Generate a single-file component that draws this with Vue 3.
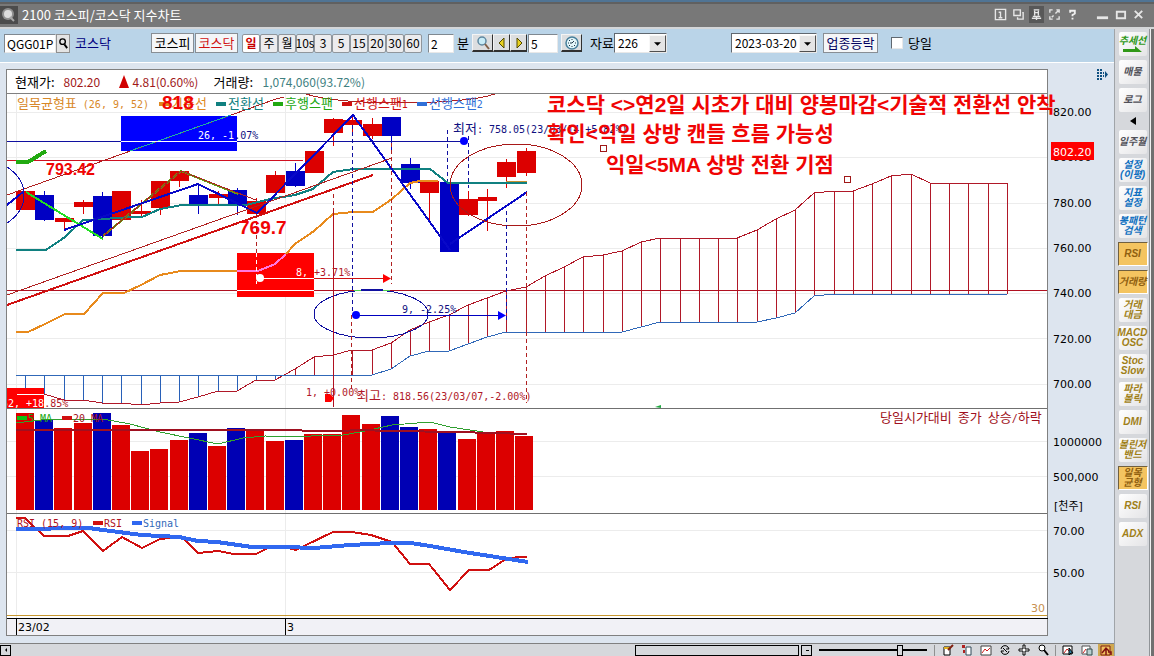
<script setup>
import { ref } from 'vue'

const code = ref('QGG01P')
const minute = ref('2')
const step = ref('5')
const count = ref('226')
const date = ref('2023-03-20')
const today = ref(false)
const zoomLevel = ref(76)

const periods = ['일', '주', '월', '10s', '3', '5', '15', '20', '30', '60']

const studies = [
  { lines: ['추세선'], tone: 'green', arrow: true },
  { lines: ['매물'], tone: 'gray' },
  { lines: ['로그'], tone: 'gray' },
  { divider: true },
  { lines: ['일주월'], tone: 'gray' },
  { lines: ['설정', '(이평)'], tone: 'blue' },
  { lines: ['지표', '설정'], tone: 'blue' },
  { lines: ['봉패턴', '검색'], tone: 'blue' },
  { lines: ['RSI'], tone: 'gold', on: true },
  { lines: ['거래량'], tone: 'gold', on: true },
  { lines: ['거래', '대금'], tone: 'gold' },
  { lines: ['MACD', 'OSC'], tone: 'gold' },
  { lines: ['Stoc', 'Slow'], tone: 'gold' },
  { lines: ['파라', '볼릭'], tone: 'gold' },
  { lines: ['DMI'], tone: 'gold' },
  { lines: ['볼린저', '밴드'], tone: 'gold' },
  { lines: ['일목', '균형'], tone: 'gold', on: true },
  { lines: ['RSI'], tone: 'gold' },
  { lines: ['ADX'], tone: 'gold' }
]

const xAt = (i) => Math.round(25 + i * 19.25)

// direction, body top, body bottom, high, low
const candles = [
  ['u', 191, 210, 191, 210], ['d', 195, 220, 191, 221], ['u', 218, 222, 218, 230],
  ['u', 202, 207, 200, 214], ['d', 196, 236, 192, 238], ['u', 191, 220, 191, 220],
  ['u', 211, 214, 200, 217], ['u', 181, 208, 181, 215], ['u', 171, 181, 171, 187],
  ['d', 195, 206, 184, 214], ['u', 194, 198, 191, 205], ['d', 190, 205, 188, 215],
  ['u', 201, 214, 198, 214], ['u', 175, 193, 171, 193], ['d', 171, 186, 163, 187],
  ['u', 151, 173, 151, 173], ['u', 119, 133, 118, 146], ['u', 120, 125, 114, 135],
  ['u', 124, 136, 118, 139], ['d', 117, 136, 117, 153], ['d', 164, 183, 158, 189],
  ['u', 181, 193, 181, 223], ['d', 182, 252, 182, 252], ['u', 199, 215, 191, 216],
  ['u', 197, 201, 189, 231], ['u', 162, 177, 159, 188], ['u', 151, 173, 148, 176]
]

const spanA = [
  394, 394, 400, 400, 403, 403, 405, 403, 402, 397, 391, 391, 380, 380, 369, 357, 355, 350,
  350, 343, 330, 322, 315, 305, 298, 291, 287, 276, 267, 257, 255, 251, 242, 238, 238, 238,
  238, 238, 230, 219, 210, 193, 191, 191, 184, 176, 174, 183, 183, 183, 183, 183
]
const spanB = [
  ...Array(19).fill(375), 369, 356, 351, 351, 344, 337,
  ...Array(7).fill(332), 327, ...Array(6).fill(322), 318, 313, 296, ...Array(10).fill(294)
]
const pts = (arr) => arr.map((y, i) => `${xAt(i)},${y}`).join(' ')

const volumes = [
  ['u', 413], ['d', 420], ['u', 428], ['u', 423], ['d', 413], ['u', 425], ['u', 451],
  ['u', 449], ['u', 440], ['d', 433], ['u', 446], ['d', 428], ['u', 430], ['u', 441],
  ['d', 440], ['u', 434], ['u', 434], ['u', 415], ['u', 424], ['d', 416], ['d', 427],
  ['u', 429], ['d', 432], ['u', 439], ['u', 433], ['u', 431], ['u', 436]
]

const grid = [112, 157, 203, 248, 293, 338, 384, 441, 476, 530, 572]
const scale = [
  [116, '820.00'], [161, '800.00'], [207, '780.00'], [252, '760.00'], [297, '740.00'],
  [343, '720.00'], [388, '700.00'], [446, '1000000'], [481, '500,000'], [535, '70.00'], [577, '50.00']
]
const legend = [
  [159, '#e08820', '기준선', ''], [216, '#108080', '전환선', ''], [273, '#20a810', '후행스팬', ''],
  [342, '#d01010', '선행스팬', '1'], [417, '#3070d8', '선행스팬', '2']
]
</script>

<template>
  <div class="window">
    <header class="title">
      <svg class="logo" viewBox="0 0 18 18">
        <rect width="18" height="18" fill="#4c4c4c" />
        <circle cx="8" cy="8" r="6" fill="#909090" />
        <circle cx="8" cy="8" r="4" fill="#dcdcdc" />
        <path d="M10 11l4 4" stroke="#a8a8a8" stroke-width="2" />
      </svg>
      <h1>2100 코스피/코스닥 지수차트</h1>
      <div class="winbtns">
        <button aria-label="1번 화면"><svg viewBox="0 0 14 14"><path d="M1.500 1.500h11v11h-11zM5 4.500h2v6M5 10.500h4" fill="none" stroke="#e6e6e6" stroke-width="1.500" /></svg></button>
        <button aria-label="겹치기"><svg viewBox="0 0 14 14"><path d="M2 2h7v6H2zM11 5h1v7H6v-2" fill="none" stroke="#e6e6e6" stroke-width="1.500" /></svg></button>
        <button aria-label="고정" class="pinned"><svg viewBox="0 0 14 14"><path d="M4 2h6M5 3v5M9 3v5M3 9h8M2 11h10M7 9v4M5 5h4" fill="none" stroke="#e6e6e6" stroke-width="1.500" /></svg></button>
        <button aria-label="확대"><svg viewBox="0 0 14 14"><path d="M2 5V2h3M9 2h3v3M12 9v3H9M5 12H2V9M8 6l3-3M6 8l-2 2" fill="none" stroke="#e6e6e6" stroke-width="1.500" /></svg></button>
        <button aria-label="도움말"><svg viewBox="0 0 14 14"><path d="M4.500 5V3h5v3L7 7.500V9M7 10.500v2" fill="none" stroke="#f0f0f0" stroke-width="2" /></svg></button>
        <button aria-label="최소화" class="sys"><svg viewBox="0 0 14 14"><path d="M1 9h12v3H1z" fill="#e6e6e6" /></svg></button>
        <button aria-label="최대화"><svg viewBox="0 0 14 14"><path d="M3 4h9v7H3z" fill="none" stroke="#e6e6e6" stroke-width="2" /></svg></button>
        <button aria-label="닫기"><svg viewBox="0 0 14 14"><path d="M3 3l8 8M11 3l-8 8" stroke="#e6e6e6" stroke-width="2" /></svg></button>
      </div>
    </header>

    <div class="body">
      <main class="main">
        <form class="toolbar" @submit.prevent>
          <input v-model="code" class="field code" aria-label="종목코드" />
          <button class="find" aria-label="종목 검색"><svg viewBox="0 0 12 14"><circle cx="5" cy="5" r="3" fill="none" stroke="#000" stroke-width="1.500" /><path d="M7 8l3 4" stroke="#000" stroke-width="2" /></svg></button>
          <span class="name">코스닥</span>
          <button class="mkt">코스피</button>
          <button class="mkt sel">코스닥</button>
          <div class="periods">
            <button v-for="(p, i) in periods" :key="p" :class="{ active: i === 0 }">{{ p }}</button>
          </div>
          <input id="minute" v-model="minute" class="field minute" />
          <label for="minute" class="unit">분</label>
          <button class="raised wide" aria-label="돋보기"><svg viewBox="0 0 16 16"><circle cx="7" cy="6" r="4" fill="#c8ecf8" stroke="#6088a0" stroke-width="1.500" /><path d="M10 9l4 5" stroke="#806048" stroke-width="2" /></svg></button>
          <button class="raised" aria-label="이전"><svg viewBox="0 0 12 14"><path d="M8 2v10L3 7z" fill="#e8d020" stroke="#504800" /></svg></button>
          <button class="raised" aria-label="다음"><svg viewBox="0 0 12 14"><path d="M4 2v10l5-5z" fill="#e8d020" stroke="#504800" /></svg></button>
          <input v-model="step" class="field step" aria-label="이동 간격" />
          <button class="raised wide clock" aria-label="시간"><svg viewBox="0 0 16 16"><circle cx="8" cy="8" r="6" fill="#e4f6fa" stroke="#48809c" stroke-width="1.500" /><path d="M8 4v1M8 11v1M4 8h1M11 8h1M8 8l2-2M8 8H6M5 5l1 1M10 10l1 1M5 11l1-1" stroke="#203848" /></svg></button>
          <label for="count" class="cntlabel">자료</label>
          <span class="combo cnt"><select id="count" v-model="count"><option>226</option></select><i><svg viewBox="0 0 8 4"><path d="M0 0h8L4 4z" /></svg></i></span>
          <span class="combo date"><select v-model="date" aria-label="기준일"><option>2023-03-20</option></select><i><svg viewBox="0 0 8 4"><path d="M0 0h8L4 4z" /></svg></i></span>
          <button class="mkt updown">업종등락</button>
          <label class="check"><input v-model="today" type="checkbox" />당일</label>
        </form>

        <section class="quote-row">
          <div class="quote">
            <span>현재가:</span><span class="price">802.20</span>
            <svg class="tri" viewBox="0 0 10 13"><path d="M5 0l5 13H0z" fill="#d00000" /></svg>
            <span class="chg">4.81(0.60%)</span><span class="vlabel">거래량:</span><span class="vol">1,074,060(93.72%)</span>
          </div>
          <button class="expand" aria-label="펼치기"><svg viewBox="0 0 12 12"><path d="M0 0h2v2H0zM3 0h2v2H3zM0 3h2v2H0zM3 3h2v2H3zM0 6h2v2H0zM3 6h2v2H3zM0 9h2v2H0zM3 9h2v2H3zM6 3h1v2H6zM6 6h1v2H6zM8 2l3 3.500L8 9z" fill="#105080" /></svg></button>
        </section>

        <svg class="chart" viewBox="0 94 1114 549" role="img" aria-label="코스닥 일봉 차트">
          <defs>
            <clipPath id="plot"><rect x="7" y="94" width="1040" height="314" /></clipPath>
          </defs>
          <rect x="6" y="94" width="1042" height="542" fill="#808080" />
          <rect x="7" y="94" width="1040" height="524" fill="#fff" />
          <rect x="7" y="619" width="1040" height="16" fill="#f1f1f6" />

          <g class="crisp">
            <path v-for="y in grid" :key="y" :d="`M7 ${y}.500H1047`" stroke="#ececec" />
            <path d="M16.500 94V618M285.500 94V618" stroke="#ececec" />
          </g>

          <g clip-path="url(#plot)">
            <g class="crisp" fill="none">
              <template v-for="(a, i) in spanA" :key="i">
                <path :d="`M${xAt(i)}.500 ${a}V${spanB[i]}`" :stroke="a > spanB[i] ? '#2860b8' : '#b01828'" />
              </template>
              <polyline :points="pts(spanA)" stroke="#b01828" />
              <polyline :points="'16,375 ' + pts(spanB)" stroke="#3068b8" />
              <path d="M7 290.500H1047" stroke="#b01020" />
              <path d="M7 160.500H303" stroke="#d01020" />
            </g>

            <g class="crisp">
              <g v-for="(c, i) in candles" :key="i" :fill="c[0] === 'u' ? '#dc0000' : '#0000c4'">
                <rect :x="xAt(i)" :y="c[3]" width="1" :height="c[4] - c[3]" />
                <rect :x="xAt(i) - 9" :y="c[1]" width="19" :height="c[2] - c[1]" />
              </g>
            </g>

            <rect x="121" y="116" width="116" height="35" fill="#0000ff" />
            <rect x="237" y="253" width="77" height="44" fill="#ff0000" />
            <rect x="7" y="388" width="37" height="20" fill="#ff0000" />

            <g fill="none" stroke-width="2" class="crisp">
              <polyline stroke="#108080" points="16,250 46,250 65,237 83,220 103,219 131,217 142,217 160,209 182,205 246,205 270,199 295,195 313,189 333,172 353,169 430,169 448,183 527,183" />
              <polyline stroke="#e88a1c" points="16,332 28,332 45,324 65,314 84,314 103,293 124,293 141,285 160,275 181,271 237,271" />
              <polyline stroke="#ff78e0" points="237,271 258,271 275,264 286,254" />
              <polyline stroke="#e88a1c" points="286,254 295,244 314,231 333,214 353,212 373,212 392,199 410,183 420,181 438,181" />
              <path stroke="#c89030" stroke-width="1" d="M506 181.500H527" />
              <polyline stroke="#22aa11" stroke-width="4" points="16,162 28,162 46,151" />
              <path stroke="#22dd22" d="M26 192L103 239" />
              <polyline stroke="#60a010" points="103,236 181,171 238,194" />
              <path stroke="#b02020" stroke-width="1" d="M103 236L181 171L256 200" />
              <path stroke="#0808c8" d="M7 205L23 192" />
              <polyline stroke="#0808c8" points="64,230 198,184 257,213 353,115 450,250" />
              <path stroke="#0808c8" d="M450 244L527 192" />
              <path stroke="#d01010" d="M7 305L373 175" />
            </g>

            <g fill="none" class="crisp">
              <path stroke="#b02020" d="M7 195L276 99L284 97M7 295L392 158" />
              <path stroke="#20b0a0" d="M130 151L231 115" />
              <path stroke="#b02020" d="M306 94C340 106 460 106 495 94" />
              <ellipse cx="516" cy="185" rx="66" ry="41" stroke="#a81818" />
              <ellipse cx="371" cy="314" rx="57" ry="24" stroke="#1010a0" />
              <path stroke="#50d050" d="M354 290.500H361M383 290.500H390" />
              <path stroke="#1010b0" d="M7 167Q24 178 24 195Q24 212 7 223" />
              <path stroke="#1010a0" d="M7 141.500H464M361 289.500H383" />
              <path stroke="#fff" d="M121 141.500H237M237 290.500H314M17 394.500H44" />
              <g stroke-dasharray="4 3">
                <path stroke="#b02020" d="M256.500 214V253M351.500 315V392M333.500 194V212M391.500 143V284M526.500 192V403" />
                <path stroke="#fff" d="M256.500 253V284" />
                <path stroke="#1010a0" d="M352.500 125V315M447.500 130V181M468.500 136V188M506.500 211V322" />
              </g>
              <path stroke="#b01020" d="M333.500 212V407" />
              <path stroke="#d01010" d="M314 278.500H386" />
              <path stroke="#fff" d="M260 278.500H314" />
              <path stroke="#0000c0" d="M356 315.500H500" />
              <path stroke="#a01818" d="M600.500 145.500h6v6h-6zM844.500 176.500h6v6h-6z" />
            </g>
            <circle cx="464" cy="141" r="4" fill="#00f" />
            <circle cx="260" cy="278" r="4" fill="#fff" />
            <path d="M383 274L391 278.500L383 283z" fill="#f00" />
            <circle cx="356" cy="315" r="4" fill="#00f" />
            <path d="M498 311L506 315.500L498 320z" fill="#00f" />
            <path d="M325 394h5l4 4-3 4h-6z" fill="#f00" />
            <path d="M655 407l6-2v3z" fill="#20a840" />

            <g class="mono">
              <text x="2" y="407" fill="#fff">52, +18<tspan fill="#b01828">.85%</tspan></text>
              <text x="198" y="139" fill="#fff">26, -1<tspan fill="#101080">.07%</tspan></text>
              <text x="296" y="276" fill="#fff">8, <tspan fill="#b01828">+3.71%</tspan></text>
              <text x="402" y="313" fill="#101080">9, -2.25%</text>
              <text x="306" y="396" fill="#b01828">1, +0.00%</text>
              <text x="453" y="133" fill="#101080"><tspan class="ko">최저</tspan>: 758.05(23/03/14,+5.82%)</text>
              <text x="357" y="400" fill="#b01828"><tspan class="ko">최고</tspan>: 818.56(23/03/07,-2.00%)</text>
              <text x="17" y="108" fill="#d88828"><tspan class="ko">일목균형표</tspan> (26, 9, 52)</text>
              <g v-for="l in legend" :key="l[0]" :fill="l[1]">
                <rect :x="l[0]" y="102" width="10" height="4" />
                <text :x="l[0] + 12" y="108"><tspan class="ko">{{ l[2] }}</tspan>{{ l[3] }}</text>
              </g>
            </g>
          </g>

          <g class="crisp">
            <rect v-for="(v, i) in volumes" :key="i" :x="Math.round(16 + i * 19.2)" :y="v[1]" width="18" :height="510 - v[1]" :fill="v[0] === 'u' ? '#dc0000' : '#0000b4'" />
          </g>
          <g fill="none" class="crisp">
            <polyline stroke="#30a030" points="16,423 50,419 103,419 130,424 160,432 218,444 243,438 265,436 302,437 320,435 338,436 365,431 392,425 430,422 450,427 490,433 527,434" />
            <polyline stroke="#a01020" stroke-width="2" points="16,430 296,430 307,431 343,431 357,430 391,431 457,432 527,434" />
            <polyline stroke="#d01010" stroke-width="2" points="16,518 25,518 44,536 68,536 83,531 103,551 122,537 142,548 160,539 182,537 198,553 218,551 234,554 256,554 268,548 285,547 296,550 304,546 333,532 352,532 371,535 392,542 410,564 429,564 450,590 469,570 489,570 506,559 518,557 527,557" />
            <polyline stroke="#3068f0" stroke-width="4" points="16,529 89,528 103,530 142,535 179,537 198,541 217,542 252,547 285,547 314,548 350,545 390,543 411,543 430,546 464,552 528,562" />
          </g>
          <g class="mono">
            <rect x="17" y="416" width="10" height="4" fill="#10c010" />
            <text x="28" y="422" fill="#20a810">5 MA</text>
            <rect x="62" y="416" width="10" height="4" fill="#d01010" />
            <text x="73" y="422" fill="#a01020">20 MA</text>
            <text x="880" y="422" fill="#a01020"><tspan class="ko">당일시가대비</tspan> <tspan class="ko">종가</tspan> <tspan class="ko">상승</tspan>/<tspan class="ko">하락</tspan></text>
            <text x="17" y="527" fill="#b01020">RSI (15, 9)</text>
            <rect x="93" y="521" width="10" height="4" fill="#d01010" />
            <text x="104" y="527" fill="#b01020">RSI</text>
            <rect x="132" y="521" width="10" height="4" fill="#3068f0" />
            <text x="143" y="527" fill="#3068b8">Signal</text>
          </g>

          <g class="crisp" fill="none">
            <path d="M7 408.500H1047M7 513.500H1047" stroke="#707070" />
            <path d="M7 615.500H1047" stroke="#c89830" />
            <path d="M7 618.500H1048M16.500 618V635M285.500 618V635" stroke="#000" />
          </g>

          <g class="axis">
            <text v-for="s in scale" :key="s[0]" x="1053" :y="s[0]">{{ s[1] }}</text>
            <text x="1054" y="510">[천주]</text>
            <text x="1031" y="612" class="base">30</text>
            <text x="18" y="631">23/02</text>
            <text x="287" y="631">3</text>
            <rect x="1051" y="142" width="43" height="18" fill="#f00" />
            <text x="1053" y="156" class="now">802.20</text>
          </g>

          <g class="memo">
            <text x="547" y="112">코스닥 &lt;&gt;연2일 시초가 대비 양봉마감&lt;기술적 전환선 안착</text>
            <text x="547" y="141">확인&lt;익일 상방 캔들 흐름 가능성</text>
            <text x="606" y="172">익일&lt;5MA 상방 전환 기점</text>
            <text x="162" y="109" class="level">818</text>
            <text x="239" y="234" class="level">769.7</text>
            <text x="46" y="175" class="level small">793.42</text>
          </g>
        </svg>

        <footer class="bottom">
          <button class="box" aria-label="왼쪽으로"><svg viewBox="0 0 8 8"><path d="M5 2v4L3 4z" /></svg></button>
          <div class="track"><div class="thumb"></div></div>
          <button class="box" aria-label="축소"><svg viewBox="0 0 8 8"><path d="M3 4h3v1H3z" /></svg></button>
          <input v-model="zoomLevel" class="slider" type="range" min="0" max="100" aria-label="확대 비율" />
          <div class="tools">
            <button aria-label="편집"><svg viewBox="0 0 12 12"><path d="M2 3h6v8H2z" fill="#fff" stroke="#000" /><path d="M2 3h6v2H2z" fill="#e0b020" /><path d="M6 6l5-5" stroke="#802010" stroke-width="2" /></svg></button>
            <button aria-label="복사"><svg viewBox="0 0 12 12"><path d="M5 3h5v8H5z" fill="#fff" stroke="#304858" /><path d="M1 1h3v3H1zM2 6h2v3H2z" fill="#b02020" /></svg></button>
            <button aria-label="추세"><svg viewBox="0 0 12 12"><path d="M1 2h10v9H1z" fill="#fff" stroke="#404040" /><path d="M2 9l3-4 2 2 3-3" fill="none" stroke="#d02020" /></svg></button>
            <button aria-label="새로고침"><svg viewBox="0 0 12 12"><path d="M2 5a4 4 0 017-2l1 2H7M10 7a4 4 0 01-7 2L2 7h3M4 4l4 4" fill="none" stroke="#000" /></svg></button>
            <button aria-label="십자선"><svg viewBox="0 0 12 12"><path d="M5 1h2v4h4v2H7v4H5V7H1V5h4z" fill="#fff" stroke="#000" /></svg></button>
            <button aria-label="검색"><svg viewBox="0 0 12 12"><circle cx="5" cy="4" r="3" fill="#fff" stroke="#000" /><path d="M7 6l4 5" stroke="#000" stroke-width="2" /></svg></button>
            <span class="sep"></span>
            <button aria-label="차트 선택"><svg viewBox="0 0 12 12"><path d="M1 2h9v8H1z" fill="#fff" stroke="#000" /><path d="M2 9l3-4 2 2" fill="none" stroke="#d02020" /><path d="M7 4v7l2-2h2z" fill="#3080a0" stroke="#000" /></svg></button>
            <button aria-label="차트 복사"><svg viewBox="0 0 12 12"><path d="M1 2h8v8H1z" fill="#fff" stroke="#505050" /><path d="M2 9l3-4" stroke="#d02020" /><path d="M6 5h5v6H6z" fill="#b8d0d0" stroke="#304848" /></svg></button>
            <button class="on" aria-label="차트 이동"><svg viewBox="0 0 12 12"><path d="M1 2h9v9H1z" fill="#f0c060" stroke="#802010" /><path d="M2 9l4-5 3 3M6 4v7M8 8h3v3" fill="none" stroke="#801010" stroke-width="1.500" /></svg></button>
          </div>
        </footer>
      </main>

      <aside class="side">
        <template v-for="(s, i) in studies" :key="i">
          <div v-if="s.divider" class="divider"><svg viewBox="0 0 6 8"><path d="M6 0v8L0 4z" /></svg></div>
          <button v-else :class="['study', s.tone, { on: s.on }]">
            <span v-for="t in s.lines" :key="t">{{ t }}</span>
            <svg v-if="s.arrow" viewBox="0 0 20 7"><path d="M0 3h12V0l7 6H0z" fill="#309818" /></svg>
          </button>
        </template>
      </aside>
    </div>
  </div>
</template>

<style>
body { margin: 0; background: #d6d8dc; }
</style>

<style scoped>
* { box-sizing: border-box; }
.window {
  min-height: 100vh; display: flex; flex-direction: column; overflow: hidden;
  font-family: "Noto Sans CJK KR", sans-serif;
  font-size: 13px; color: #000;
}
button, input, select { font: inherit; padding: 0; margin: 0; border-radius: 0; color: inherit; }
button { background: none; border: 0; display: flex; align-items: center; justify-content: center; white-space: nowrap; }
svg { display: block; }
.title {
  height: 29px; flex: none; display: flex; align-items: center;
  background: #787878; border-top: 2px solid #507494; border-bottom: 2px solid #d4d6d8;
  box-shadow: inset 0 2px #606060; color: #fff;
}
.logo { width: 18px; height: 18px; }
.title h1 { margin: 0 0 0 4px; font-size: 13px; line-height: 18px; font-weight: 400; flex: 1; }
.winbtns { display: flex; gap: 3px; padding-right: 8px; }
.winbtns button { width: 15px; height: 17px; }
.winbtns svg { width: 13px; height: 13px; }
.winbtns .pinned { background: #585858; }
.winbtns .sys { margin-left: 12px; }
.body { flex: 1; display: flex; background: #dde5ef; }
.main { flex: 1; min-width: 0; display: flex; flex-direction: column; }

.toolbar {
  height: 34px; flex: none; display: flex; align-items: center; padding: 0 0 5px 4px;
  background: #bad4e8; border-bottom: 1px solid #fff; line-height: 18px; white-space: nowrap;
}
.toolbar > * { flex: none; }
.field { height: 19px; border: 1px solid #808890; border-right-color: #e8e8e8; border-bottom-color: #e8e8e8; background: #fff; padding-left: 2px; outline: 0; font-size: 12px; }
.code { width: 52px; }
.find { width: 14px; height: 19px; background: #e4e4e4; border: 1px solid #909090; }
.find svg { width: 11px; height: 13px; }
.name { width: 81px; padding-left: 5px; color: #000080; }
.mkt { width: 43px; height: 20px; background: #f4f6f8; border: 1px solid #888e94; margin-right: 1px; }
.sel { color: #d01010; }
.periods { display: flex; margin-left: 3px; }
.periods button { width: 18px; height: 19px; border: 1px solid #90969c; border-radius: 2px; background: #ececee; font-size: 12px; }
.periods button.active { background: #fff; color: #c80000; font-weight: 700; }
.minute { width: 26px; margin-left: 6px; }
.unit { width: 18px; padding-left: 3px; }
.raised { width: 17px; height: 18px; background: #dcdee0; border: 1px solid #f4f4f4; border-right-color: #303030; border-bottom: 2px solid #303030; }
.raised svg { width: 12px; height: 14px; }
.raised.wide { width: 21px; }
.raised.wide svg { width: 16px; height: 16px; }
.step { width: 30px; margin-left: 1px; }
.clock { margin-left: 3px; }
.cntlabel { width: 32px; padding-left: 8px; }
.combo { position: relative; display: block; height: 20px; background: #fff; border: 1px solid #606870; border-right-color: #e8e8e8; border-bottom-color: #e8e8e8; font-size: 12px; }
.combo select { width: 100%; height: 100%; border: 0; background: none; appearance: none; padding-left: 3px; outline: 0; display: block; }
.combo i { position: absolute; right: 0; top: 1px; bottom: 0; width: 17px; background: #e4e4e4; border: 1px solid #f8f8f8; border-right-color: #505050; border-bottom-color: #505050; display: flex; align-items: center; justify-content: center; pointer-events: none; }
.combo svg { width: 7px; height: 4px; }
.cnt { width: 53px; }
.date { width: 86px; margin-left: 64px; }
.updown { width: 55px; margin-left: 6px; color: #000060; }
.check { display: flex; align-items: center; gap: 5px; margin-left: 12px; }
.check input { appearance: none; width: 12px; height: 12px; background: #fff; border: 1px solid #606870; border-right-color: #e8e8e8; border-bottom-color: #e8e8e8; }
.check input:checked { background: #406890; }

.quote-row { height: 31px; flex: none; display: flex; padding: 6px 5px 0 6px; }
.quote { flex: 1; display: flex; align-items: center; height: 25px; background: #fff; border: 1px solid #808080; padding-left: 8px; margin-right: 49px; line-height: 18px; white-space: nowrap; }
.price, .chg, .vol { font-size: 12px; }
.price { color: #a01818; margin-left: 9px; width: 55px; }
.tri { width: 10px; height: 13px; margin-right: 4px; }
.chg { color: #a01818; width: 81px; }
.vlabel { width: 49px; }
.vol { color: #408080; }
.expand { width: 12px; height: 12px; }
.expand svg { width: 12px; height: 12px; }

.chart { width: 100%; height: auto; }
.crisp { shape-rendering: crispEdges; }
.mono { font-family: "DejaVu Sans Mono", monospace; font-size: 10px; white-space: pre; }
.mono .ko { font-family: "Noto Sans CJK KR", sans-serif; font-size: 13px; }
.axis { font-family: "DejaVu Sans", "Noto Sans CJK KR", sans-serif; font-size: 11px; }
.axis .now { fill: #fff; }
.axis .base { fill: #c89050; }
.memo { font-family: "Liberation Sans", "Noto Sans CJK KR", sans-serif; font-size: 21px; font-weight: 700; fill: #f00404; }
.memo .level { font-size: 19px; }
.memo .small { font-size: 16px; }

.bottom { height: 13px; flex: none; margin-top: auto; display: flex; align-items: center; background: #d6d8dc; border-top: 1px solid #808080; }
.box { width: 11px; height: 11px; border: 1px solid #000; flex: none; }
.box svg { width: 8px; height: 8px; }
.track { flex: 1; display: flex; justify-content: flex-end; padding-right: 2px; }
.thumb { width: 164px; height: 11px; border: 1px solid #000; }
.slider { appearance: none; width: 108px; height: 11px; background: linear-gradient(#000, #000) center / 100% 2px no-repeat; margin: 0 7px; }
.slider::-webkit-slider-thumb { appearance: none; width: 6px; height: 11px; background: #d6d8dc; border: 1px solid #000; }
.tools { display: flex; align-items: center; gap: 3px; padding-left: 5px; border-left: 1px solid #909090; height: 11px; }
.tools button { width: 16px; height: 12px; }
.tools svg { width: 12px; height: 12px; }
.tools .on { background: #d0a850; }
.sep { width: 1px; height: 11px; background: #909090; margin: 0 1px; }

.side { width: 40px; flex: none; display: flex; flex-direction: column; align-items: center; gap: 4px; padding: 3px 1px 0 0; background: #d6d8dc; border-left: 1px solid #a0a4a8; border-right: 3px solid #707070; box-shadow: inset -1px 0 #f0f0f0, inset -2px 0 #909498; }
.study { width: 28px; height: 24px; flex-direction: column; background: linear-gradient(135deg, #fff, #e4e4e6); border-radius: 2px; font-family: "Liberation Sans", "Noto Sans CJK KR", sans-serif; font-size: 10px; line-height: 10px; font-weight: 700; font-style: italic; }
.study svg { width: 20px; height: 7px; }
.green { color: #309818; }
.gray { color: #505058; }
.blue { color: #1070c0; }
.gold { color: #a08018; }
.on.study { background: #f4c460; border: 1px solid #706040; border-right-color: #fff; border-bottom-color: #fff; color: #906010; border-radius: 0; width: 30px; }
.divider { height: 10px; display: flex; align-items: center; }
.divider svg { width: 6px; height: 8px; }
</style>
